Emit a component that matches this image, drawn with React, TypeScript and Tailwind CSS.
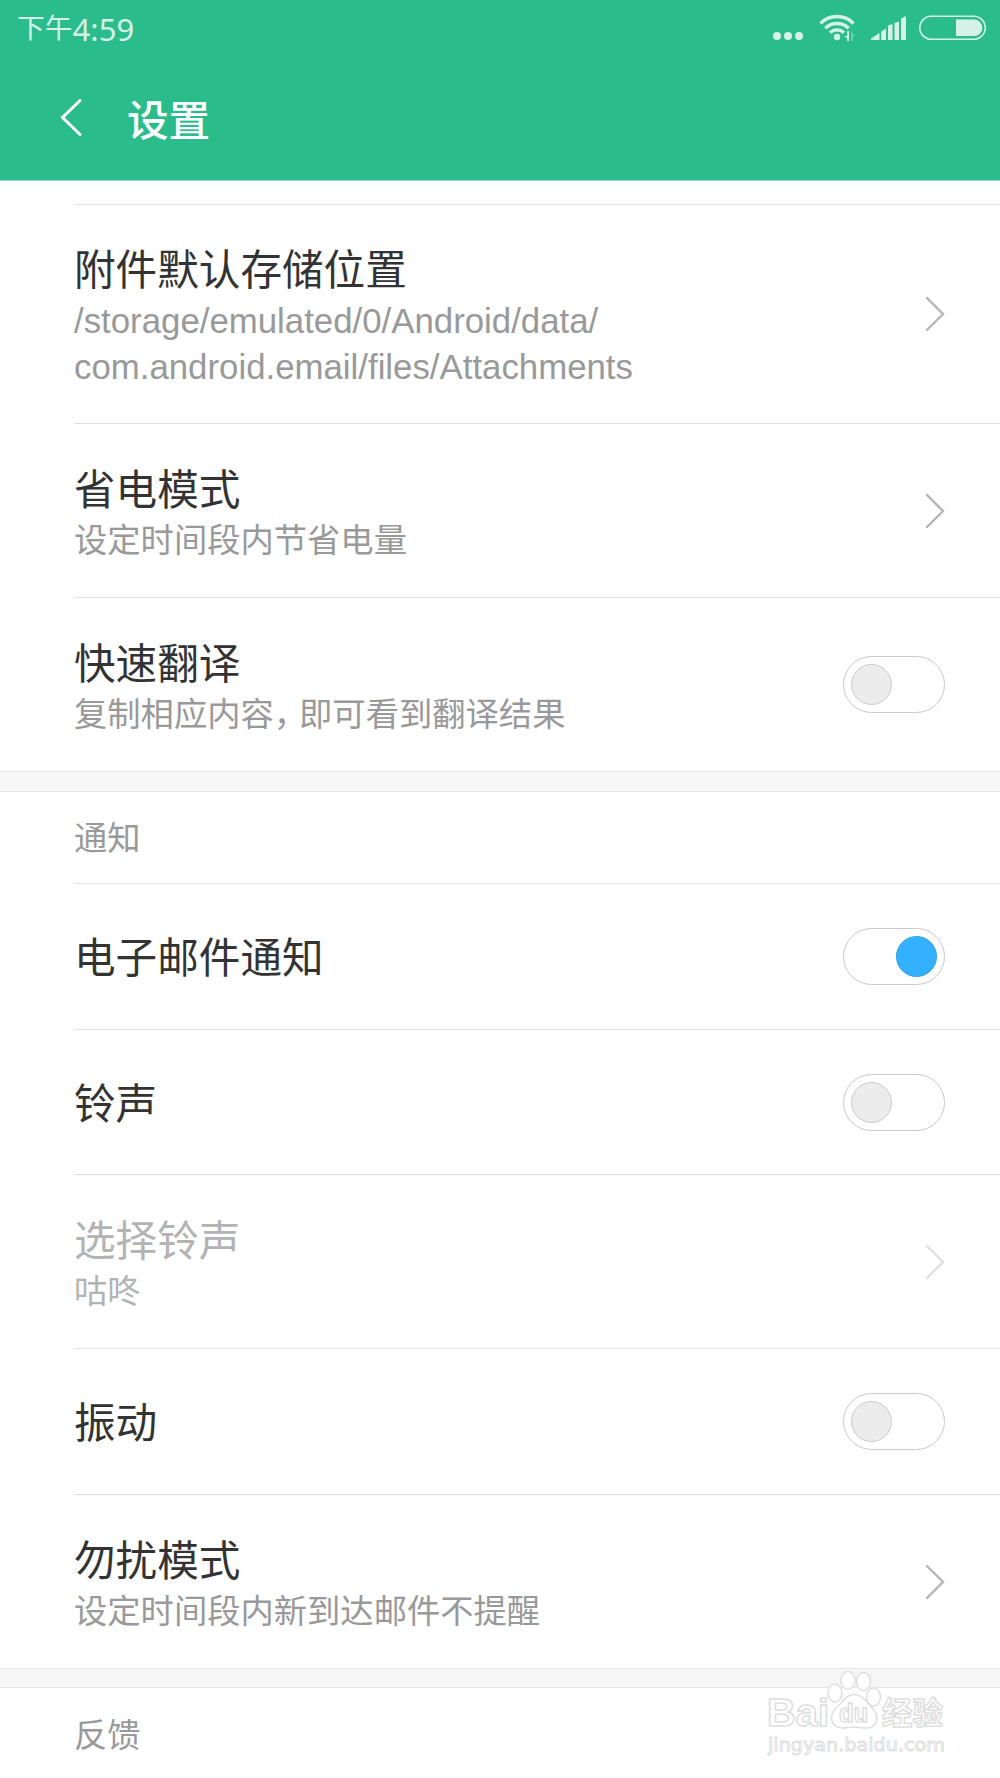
import type { ReactNode } from "react";
import clsx from "clsx";

interface SettingItem {
  title: string;
  lines?: ReactNode[];
  control: "arrow" | "switch";
  checked?: boolean;
  disabled?: boolean;
  height: string;
  last?: boolean;
}

const generalItems: SettingItem[] = [
  {
    title: "附件默认存储位置",
    lines: [
      <span className="text-[34.8px]">/storage/emulated/0/Android/data/</span>,
      <span className="text-[34.8px]">com.android.email/files/Attachments</span>,
    ],
    control: "arrow",
    height: "h-[219px]",
  },
  { title: "省电模式", lines: ["设定时间段内节省电量"], control: "arrow", height: "h-[174px]" },
  {
    title: "快速翻译",
    lines: [
      <>
        复制相应内容<span className="tracking-[-8px]">，</span>即可看到翻译结果
      </>,
    ],
    control: "switch",
    height: "h-[173px]",
    last: true,
  },
];

const notifyItems: SettingItem[] = [
  { title: "电子邮件通知", control: "switch", checked: true, height: "h-[146px]" },
  { title: "铃声", control: "switch", height: "h-[145px]" },
  { title: "选择铃声", lines: ["咕咚"], control: "arrow", disabled: true, height: "h-[174px]" },
  { title: "振动", control: "switch", height: "h-[146px]" },
  {
    title: "勿扰模式",
    lines: ["设定时间段内新到达邮件不提醒"],
    control: "arrow",
    height: "h-[173px]",
    last: true,
  },
];

function StatusBar() {
  return (
    <div className="flex h-[58px] items-center justify-between pl-[17px] pr-[14px] text-[#d6f2e8]">
      <div className="flex items-center text-[27.8px] leading-[58px]">
        <span>下午</span>
        <span className="font-['Noto_Sans'] text-[31px]">4:59</span>
      </div>
      <svg className="h-[58px] w-[214px]" viewBox="772 0 214 58" fill="currentColor">
        <circle cx="777" cy="36" r="4" />
        <circle cx="788" cy="36" r="4" />
        <circle cx="799" cy="36" r="4" />
        <g fill="none" stroke="currentColor" strokeWidth="3.4">
          <path d="M820.5 23.5a23 23 0 0 1 33 0" />
          <path d="M825.3 28.3a16.500 16.500 0 0 1 23.400 0" />
          <path d="M830 32.700a10 10 0 0 1 14 0" />
        </g>
        <circle cx="837" cy="37" r="3.2" />
        <path d="M847.2 31h1.8v10h-1.8v-2.5l-3-2.5h3z" />
        <path d="M851 41V31l4 5h-2v5z" opacity="0.35" />
        <path d="M871 40v-1.5l8.5-5.5v7zM881.3 40v-8.5l4.7-3v11.5zM888 40V25.500l4.500-1.500v16zM894.500 40V23l4.500-1.500V40zM901 40V18.500l5-2.500v24z" />
        <rect x="919.8" y="16.300" width="65.500" height="23" rx="11.500" fill="none" stroke="currentColor" strokeWidth="1.600" />
        <path d="M956 19.500h18a8.300 8.300 0 0 1 0 16.600h-18z" />
      </svg>
    </div>
  );
}

function Switch({ checked }: { checked?: boolean }) {
  return (
    <div
      className={clsx(
        "flex h-[57px] w-[102px] items-center rounded-full border border-[#c9c9c9] px-[7px]",
        checked && "justify-end"
      )}
    >
      <div
        className={clsx(
          "size-[41px] rounded-full border",
          checked ? "border-[#2da0ea] bg-[#33b1ff]" : "border-[#cacaca] bg-[#ececec]"
        )}
      />
    </div>
  );
}

function Arrow({ disabled }: { disabled?: boolean }) {
  return (
    <svg
      className={clsx("h-9 w-5", disabled ? "text-[#e0e0e0]" : "text-[#b4b4b4]")}
      viewBox="0 0 20 36"
      fill="none"
      stroke="currentColor"
      strokeWidth="2.4"
      strokeLinecap="round"
    >
      <path d="M2 2L18 18L2 34" />
    </svg>
  );
}

function Row({ item }: { item: SettingItem }) {
  return (
    <div
      className={clsx(
        "ml-[74px] flex items-center justify-between pr-[55px]",
        item.height,
        !item.last && "border-b border-[#dfdfdf]"
      )}
    >
      <div className="pt-[5px]">
        <div
          className={clsx(
            "text-[41.6px] leading-[54px]",
            item.disabled ? "text-[#b3b3b3]" : "text-[#333333]"
          )}
        >
          {item.title}
        </div>
        {item.lines?.map((line, index) => (
          <div
            key={index}
            className={clsx(
              "text-[33.3px] leading-[45px]",
              item.disabled ? "text-[#b3b3b3]" : "text-[#999999]"
            )}
          >
            {line}
          </div>
        ))}
      </div>
      {item.control === "switch" ? <Switch checked={item.checked} /> : <Arrow disabled={item.disabled} />}
    </div>
  );
}

function Watermark() {
  return (
    <svg
      className="absolute left-[760px] top-[1664px] h-[100px] w-[200px]"
      viewBox="760 1664 200 100"
      fill="#ffffff"
      fillOpacity="0.85"
      stroke="#dedede"
      strokeWidth="1.5"
    >
      <text x="767" y="1726" fontSize="38" fontWeight="700" textLength="62" lengthAdjust="spacingAndGlyphs">
        Bai
      </text>
      <ellipse cx="835" cy="1693" rx="7" ry="9" />
      <ellipse cx="848" cy="1680.500" rx="7" ry="9" />
      <ellipse cx="863.500" cy="1681.500" rx="7" ry="9" />
      <ellipse cx="873.500" cy="1697" rx="7" ry="9" />
      <path d="M854 1694.500c-6 0-10 5-14 9.500c-5 5-8.500 8-8.500 14c0 6 5 10 11 10c5 0 7-1 12-1s7 1 12 1c6 0 10.500-4 10.500-10c0-6-4-9-8-14c-4-5-9-9.500-15-9.500z" />
      <text x="839" y="1722" fontSize="25" fontWeight="700" textLength="29" lengthAdjust="spacingAndGlyphs">
        du
      </text>
      <text x="882" y="1724" fontSize="31" fontWeight="700" textLength="61" lengthAdjust="spacingAndGlyphs">
        经验
      </text>
      <text
        x="768"
        y="1751"
        fontSize="18"
        strokeWidth="1"
        textLength="177"
        lengthAdjust="spacingAndGlyphs"
        className="font-['DejaVu_Sans']"
      >
        jingyan.baidu.com
      </text>
    </svg>
  );
}

export default function App() {
  return (
    <div className="relative h-[1778px] w-[1000px] overflow-hidden bg-white font-['Liberation_Sans','Noto_Sans_CJK_SC',sans-serif]">
      <header className="h-[180px] border-b border-[#8edcc1] bg-[#2abd8b] box-content">
        <StatusBar />
        <div className="flex h-[122px] items-center pl-[60px]">
          <svg
            className="h-10 w-6 text-white"
            viewBox="0 0 24 40"
            fill="none"
            stroke="currentColor"
            strokeWidth="3"
            strokeLinecap="round"
          >
            <path d="M20 1.500L2.500 18.500L20 35.500" />
          </svg>
          <h1 className="ml-[43px] pt-[5px] text-[41.6px] font-medium leading-[60px] text-white">设置</h1>
        </div>
      </header>

      <main>
        <div className="ml-[74px] h-[24px] border-b border-[#e3e3e3]" />
        {generalItems.map((item) => (
          <Row key={item.title} item={item} />
        ))}
        <div className="h-[21px] border-y border-[#e8e8e8] bg-[#f6f6f6]" />
        <div className="ml-[74px] flex h-[92px] items-center border-b border-[#dfdfdf] pt-[3px] text-[33.3px] text-[#999999]">
          通知
        </div>
        {notifyItems.map((item) => (
          <Row key={item.title} item={item} />
        ))}
        <div className="h-5 border-y border-[#e8e8e8] bg-[#f6f6f6]" />
        <div className="ml-[74px] flex h-[92px] items-center pt-1 text-[33.3px] text-[#999999]">反馈</div>
      </main>

      <Watermark />
    </div>
  );
}
